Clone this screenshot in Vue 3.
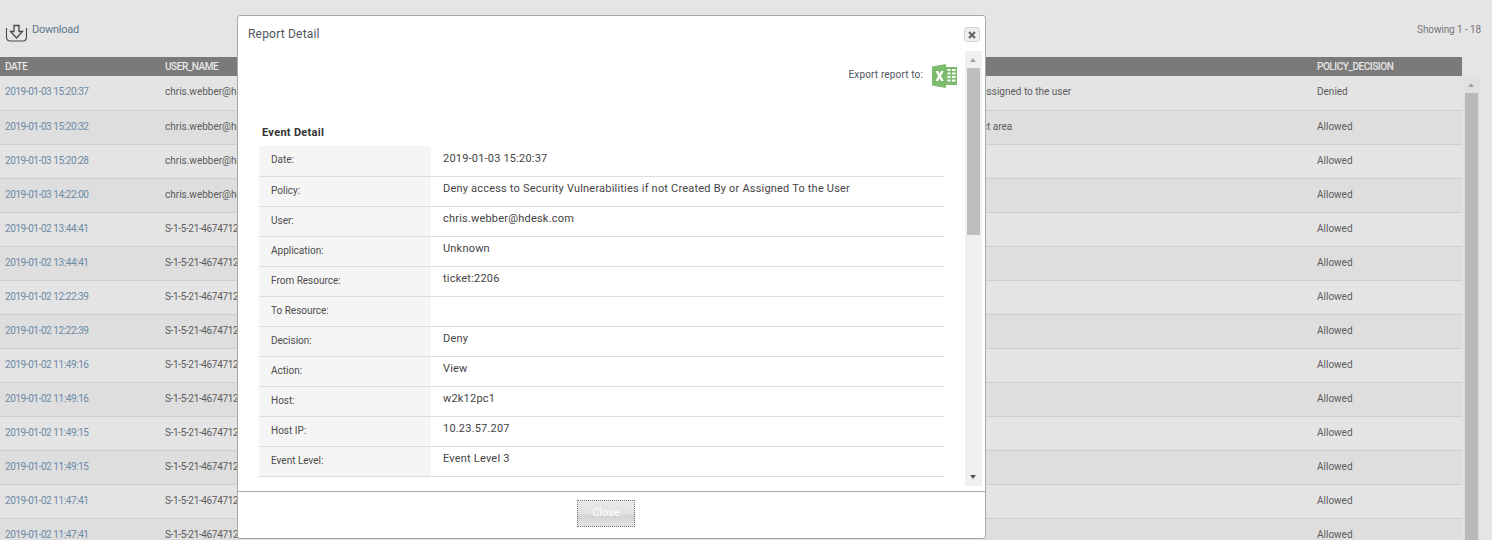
<template>
  <div class="page">
    <div class="toolbar">
      <a class="download">
        <svg class="download-icon" width="24" height="20" viewBox="0 0 24 20" fill="none" stroke="#4a4a4a">
          <path d="M1.500 5v9q0 4 4 4h12q4 0 4-4V5" stroke-width="1.100" />
          <path d="M9 2.500h5v6h3.500L11.500 15 5.500 8.500H9z" stroke-width="1.300" />
        </svg>
        <span>Download</span>
      </a>
      <span class="showing">Showing 1 - 18</span>
    </div>

    <div class="table-wrap">
      <div class="table">
        <div class="row head">
          <span>DATE</span>
          <span>USER_NAME</span>
          <span></span>
          <span>POLICY_DECISION</span>
        </div>
        <div v-for="(row, i) in rows" :key="i" class="row" :class="{ even: i % 2 === 1, first: i === 0 }">
          <span class="date">{{ row.date }}</span>
          <span :class="{ sid: row.user === sid }">{{ row.user }}</span>
          <span>{{ row.policy }}</span>
          <span>{{ row.decision }}</span>
        </div>
      </div>
      <div class="page-scroll">
        <div class="arrow up"></div>
        <div class="page-thumb"></div>
      </div>
    </div>

    <div class="modal">
      <div class="modal-header">
        <h3>Report Detail</h3>
        <button class="x-btn" aria-label="Close">
          <svg width="8" height="8" viewBox="0 0 8 8" stroke="#666" stroke-width="2.200">
            <path d="M1 1l6 6M7 1l-6 6" />
          </svg>
        </button>
      </div>
      <div class="modal-body">
        <div class="content">
          <div class="export">
            <span>Export report to:</span>
            <svg width="25" height="24" viewBox="0 0 25 24">
              <path d="M0 2.500L14 0v24L0 21.500z" fill="#7cba6d" />
              <path d="M14 3h11v18H14z" fill="#7cba6d" />
              <path d="M15.500 5h3v2h-3zM20 5h3.500v2H20zM15.500 8.500h3v2h-3zM20 8.500h3.500v2H20zM15.500 12h3v2h-3zM20 12h3.500v2H20zM15.500 15.500h3v2h-3zM20 15.500h3.500v2H20z" fill="#fff" />
              <path d="M3.500 7h2.600l1.500 3 1.500-3h2.500L9 12l2.700 5H9l-1.500-3L6 17H3.500l2.700-5z" fill="#fff" />
            </svg>
          </div>
          <div class="section-title">Event Detail</div>
          <div v-for="(item, i) in details" :key="item.label" class="detail" :class="{ first: i === 0 }">
            <div class="label">{{ item.label }}</div>
            <div class="value">{{ item.value }}</div>
          </div>
        </div>
        <div class="modal-scroll">
          <div class="arrow up"></div>
          <div class="modal-thumb"></div>
          <div class="arrow down"></div>
        </div>
      </div>
      <div class="modal-footer">
        <button class="close-btn">Close</button>
      </div>
    </div>
  </div>
</template>

<script setup>
const sid = 'S-1-5-21-4674712964-2219'

const rows = [
  { date: '2019-01-03 15:20:37', user: 'chris.webber@hdesk.com', policy: 'Deny access to Security Vulnerabilities if not created by or assigned to the user', decision: 'Denied' },
  { date: '2019-01-03 15:20:32', user: 'chris.webber@hdesk.com', policy: 'Allows access to all the Security Vulnerabilities in the project area', decision: 'Allowed' },
  { date: '2019-01-03 15:20:28', user: 'chris.webber@hdesk.com', policy: '', decision: 'Allowed' },
  { date: '2019-01-03 14:22:00', user: 'chris.webber@hdesk.com', policy: '', decision: 'Allowed' },
  { date: '2019-01-02 13:44:41', user: sid, policy: '', decision: 'Allowed' },
  { date: '2019-01-02 13:44:41', user: sid, policy: '', decision: 'Allowed' },
  { date: '2019-01-02 12:22:39', user: sid, policy: '', decision: 'Allowed' },
  { date: '2019-01-02 12:22:39', user: sid, policy: '', decision: 'Allowed' },
  { date: '2019-01-02 11:49:16', user: sid, policy: '', decision: 'Allowed' },
  { date: '2019-01-02 11:49:16', user: sid, policy: '', decision: 'Allowed' },
  { date: '2019-01-02 11:49:15', user: sid, policy: '', decision: 'Allowed' },
  { date: '2019-01-02 11:49:15', user: sid, policy: '', decision: 'Allowed' },
  { date: '2019-01-02 11:47:41', user: sid, policy: '', decision: 'Allowed' },
  { date: '2019-01-02 11:47:41', user: sid, policy: '', decision: 'Allowed' },
]

const details = [
  { label: 'Date:', value: '2019-01-03 15:20:37' },
  { label: 'Policy:', value: 'Deny access to Security Vulnerabilities if not Created By or Assigned To the User' },
  { label: 'User:', value: 'chris.webber@hdesk.com' },
  { label: 'Application:', value: 'Unknown' },
  { label: 'From Resource:', value: 'ticket:2206' },
  { label: 'To Resource:', value: '' },
  { label: 'Decision:', value: 'Deny' },
  { label: 'Action:', value: 'View' },
  { label: 'Host:', value: 'w2k12pc1' },
  { label: 'Host IP:', value: '10.23.57.207' },
  { label: 'Event Level:', value: 'Event Level 3' },
]
</script>

<style>
html,
body {
  margin: 0;
  height: 540px;
  overflow: hidden;
  background: #e5e5e5;
}
</style>

<style scoped>
.page {
  position: relative;
  height: 540px;
  overflow: hidden;
  background: #e5e5e5;
  font-family: Roboto, "Liberation Sans", sans-serif;
  font-size: 10px;
  color: #5c5c5c;
}

.toolbar {
  height: 57px;
  display: flex;
  justify-content: space-between;
  padding: 23px 11px 0 5px;
  box-sizing: border-box;
}

.download {
  display: flex;
  height: 20px;
  color: #5d7a90;
  font-size: 11px;
  letter-spacing: -0.250px;
}

.download span {
  margin: 0 0 0 3px;
  line-height: 13px;
}

.download-icon {
  display: block;
}

.showing {
  font-size: 10px;
  line-height: 13px;
  letter-spacing: -0.100px;
  color: #777;
}

.table-wrap {
  display: flex;
  align-items: flex-start;
}

.table {
  width: 1462px;
  flex: none;
}

.row {
  display: grid;
  grid-template-columns: 160px 557px 595px 1fr;
  padding-left: 5px;
  height: 34px;
  box-sizing: border-box;
  align-items: center;
  background: #e4e4e4;
  border-bottom: 1px solid #cfcfcf;
  white-space: nowrap;
  padding-bottom: 2px;
}

.row.first {
  height: 35px;
  padding-bottom: 3px;
}

.row.even {
  background: #dedede;
}

.row.head {
  height: 19px;
  padding-bottom: 0;
  background: #7a7a7a;
  border-bottom: 0;
  color: #e8e8e8;
  font-weight: 500;
  letter-spacing: -0.450px;
}

.date {
  color: #6b8aa6;
  letter-spacing: -0.420px;
}

.sid {
  letter-spacing: -0.350px;
}

.page-scroll {
  margin: 19px 0 0 1px;
  width: 17px;
  height: 464px;
  background: #e0e0e0;
  flex: none;
}

.page-thumb {
  width: 13px;
  height: 447px;
  margin: 0 2px;
  background: #b9b9b9;
}

.arrow {
  height: 17px;
  position: relative;
}

.arrow::after {
  content: "";
  position: absolute;
  left: 5px;
  top: 7px;
  border-left: 3.500px solid transparent;
  border-right: 3.500px solid transparent;
  border-bottom: 4px solid #a3a3a3;
}

.arrow.down::after {
  top: 6px;
  border-bottom: 0;
  border-top: 4px solid #555;
}

.modal {
  position: absolute;
  left: 237px;
  top: 15px;
  width: 749px;
  height: 524px;
  box-sizing: border-box;
  background: #fff;
  border: 1px solid #a9a9a9;
  border-radius: 3px;
  display: flex;
  flex-direction: column;
}

.modal-header {
  height: 35px;
  flex: none;
  display: flex;
  justify-content: space-between;
  padding: 0 5px 0 10px;
  box-sizing: border-box;
}

.modal-header h3 {
  margin: 0;
  font-size: 12px;
  font-weight: 400;
  line-height: 36px;
  letter-spacing: 0.200px;
  color: #4f5560;
}

.x-btn {
  width: 16px;
  height: 15px;
  padding: 0;
  margin-top: 11px;
  display: flex;
  align-items: center;
  justify-content: center;
  background: #eee;
  border: 1px solid #d3d3d3;
  border-radius: 3px;
}

.modal-body {
  height: 440px;
  flex: none;
  display: flex;
  overflow: hidden;
}

.content {
  width: 727px;
  padding: 0 21px;
  box-sizing: border-box;
  flex: none;
}

.export {
  display: flex;
  justify-content: flex-end;
  align-items: center;
  gap: 9px;
  margin: 13px -13px 0 0;
  height: 24px;
  color: #4f5560;
  letter-spacing: 0.150px;
}

.export span {
  padding-bottom: 4px;
}

.section-title {
  margin: 38px 0 0 3px;
  height: 20px;
  line-height: 14px;
  font-size: 11px;
  font-weight: 700;
  letter-spacing: 0.300px;
  color: #333;
}

.detail {
  display: flex;
  height: 30px;
  box-sizing: border-box;
  border-bottom: 1px solid #dcdcdc;
  color: #4c4c4c;
}

.detail.first {
  height: 31px;
}

.label {
  width: 172px;
  padding: 7px 0 0 12px;
  box-sizing: border-box;
  background: #f5f5f5;
  line-height: 13px;
}

.value {
  padding: 5px 0 0 12px;
  line-height: 13px;
  font-size: 11px;
  letter-spacing: 0.200px;
  color: #444;
}

.detail.first .value {
  padding-top: 6px;
}

.modal-scroll {
  width: 17px;
  height: 435px;
  background: #f0f0f0;
  flex: none;
  display: flex;
  flex-direction: column;
}

.modal-thumb {
  width: 13px;
  height: 167px;
  margin: 0 2px;
  background: #bebebe;
}

.modal-scroll .arrow.down {
  margin-top: auto;
}

.modal-footer {
  flex: 1;
  border-top: 1px solid #aaa;
  display: flex;
  justify-content: center;
  align-items: flex-start;
  padding: 8px 11px 0 0;
}

.close-btn {
  width: 58px;
  height: 27px;
  padding: 0 0 2px;
  border: 1px dotted #777;
  background: linear-gradient(#e9e9e9 0, #e2e2e2 50%, #d3d3d3 60%, #e4e4e4 100%);
  color: #fff;
  font: inherit;
  font-size: 11px;
}
</style>
